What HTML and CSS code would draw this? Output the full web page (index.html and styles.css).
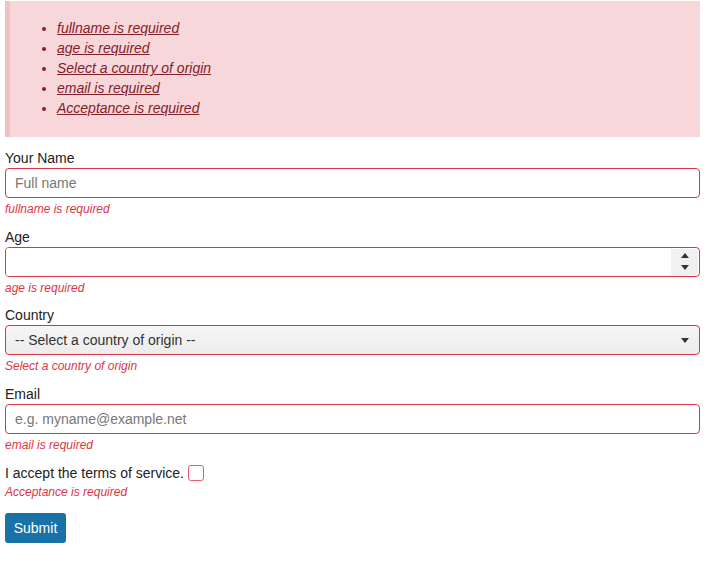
FILE: index.html
```html
<!DOCTYPE html>
<html lang="en">
<head>
<meta charset="utf-8">
<title>Form</title>
<link rel="stylesheet" href="styles.css">
</head>
<body>
<div class="page">
  <div class="alert">
    <ul class="alert-list">
      <li><a href="#name">fullname is required</a></li>
      <li><a href="#age">age is required</a></li>
      <li><a href="#country">Select a country of origin</a></li>
      <li><a href="#email">email is required</a></li>
      <li><a href="#accept">Acceptance is required</a></li>
    </ul>
  </div>
  <form class="form">
    <div class="field">
      <label class="label" for="name">Your Name</label>
      <input class="control" id="name" type="text" placeholder="Full name">
      <div class="error">fullname is required</div>
    </div>
    <div class="field">
      <label class="label" for="age">Age</label>
      <div class="control number-wrap">
        <input class="number-input" id="age" type="text">
        <div class="spinner">
          <svg width="10" height="7" viewBox="0 0 10 7"><path d="M1 6 L5 1 L9 6 Z" fill="#333"/></svg>
          <svg width="10" height="7" viewBox="0 0 10 7"><path d="M1 1 L5 6 L9 1 Z" fill="#333"/></svg>
        </div>
      </div>
      <div class="error">age is required</div>
    </div>
    <div class="field">
      <label class="label" for="country">Country</label>
      <div class="control select-wrap" id="country">
        <span class="select-text">-- Select a country of origin --</span>
        <svg width="10" height="7" viewBox="0 0 10 7"><path d="M1 1 L5 6 L9 1 Z" fill="#333"/></svg>
      </div>
      <div class="error">Select a country of origin</div>
    </div>
    <div class="field">
      <label class="label" for="email">Email</label>
      <input class="control" id="email" type="text" placeholder="e.g. myname@example.net">
      <div class="error">email is required</div>
    </div>
    <div class="check-field">
      <label class="check-label" for="accept">I accept the terms of service. <span class="checkbox" id="accept"></span></label>
      <div class="error">Acceptance is required</div>
    </div>
    <button class="submit" type="button">Submit</button>
  </form>
</div>
</body>
</html>
```
FILE: styles.css
```css
* { box-sizing: border-box; }
html, body { margin: 0; padding: 0; background: #fff; }
body {
  font-family: "Liberation Sans", Arial, sans-serif;
  font-size: 14px;
  line-height: 20px;
  color: #222;
}
.page { padding: 1px 5px 0 5px; }
.alert {
  background: #f8d7da;
  border-left: 5px solid #f2c0c5;
  padding: 17px 0 19px 0;
}
.alert-list {
  margin: 0;
  padding-left: 47px;
  color: #842029;
}
.alert-list li { line-height: 20px; }
.alert-list a {
  color: #842029;
  font-style: italic;
  text-decoration: underline;
}
.form { margin-top: 11px; }
.field { margin-bottom: 9.7px; }
.label { display: block; line-height: 20px; }
.control {
  display: block;
  width: 100%;
  height: 30px;
  border: 1px solid #dc3545;
  border-radius: 4px;
  background: #fff;
  font-family: inherit;
  font-size: 14px;
  color: #222;
  padding: 0 9px;
  outline: none;
  margin: 0;
}
.control::placeholder { color: #777; }
.number-wrap {
  display: flex;
  padding: 0;
  overflow: hidden;
}
.number-input {
  flex: 1;
  border: 0;
  outline: none;
  font: inherit;
  padding: 0 9px;
  min-width: 0;
}
.spinner {
  width: 27px;
  background: #f1f1f1;
  margin: 1px 1px 1px 0;
  border-radius: 0 2px 2px 0;
  display: flex;
  flex-direction: column;
  align-items: center;
  justify-content: center;
  gap: 5px;
}
.spinner svg { display: block; }
.select-wrap {
  display: flex;
  align-items: center;
  justify-content: space-between;
  background: linear-gradient(#f6f6f6, #ececec);
  padding: 0 9px 0 9px;
  color: #333;
}
.error {
  color: #dc3545;
  font-size: 12px;
  font-style: italic;
  line-height: 15px;
  margin-top: 4px;
}
.check-field { margin-top: 10px; }
.check-label {
  display: flex;
  align-items: center;
  gap: 4px;
  line-height: 20px;
}
.checkbox {
  display: inline-block;
  width: 16px;
  height: 16px;
  border: 1px solid #e0636f;
  border-radius: 3px;
  background: #fff;
}
.check-field .error { margin-top: 2px; }
.submit {
  margin-top: 13px;
  display: block;
  background: #1872a8;
  color: #fff;
  border: 0;
  border-radius: 3px;
  height: 30px;
  width: 61px;
  font-family: inherit;
  font-size: 14px;
  padding: 0;
}
```
